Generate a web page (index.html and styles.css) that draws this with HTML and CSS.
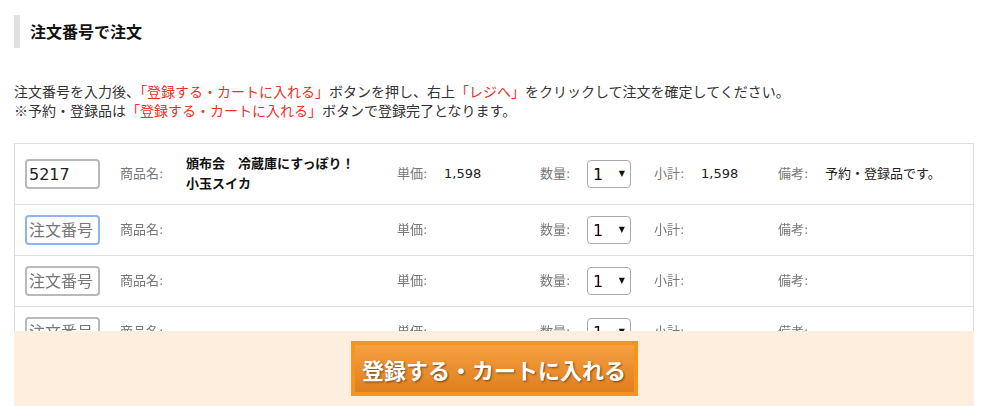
FILE: index.html
```html
<!DOCTYPE html>
<html lang="ja">
<head>
    <meta charset="UTF-8">
    <meta name="viewport" content="width=device-width, initial-scale=1.0">
    <title>注文番号で注文</title>
    <link rel="stylesheet" href="styles.css">
</head>
<body>
    <div class="order">
        <h2 class="order-title">注文番号で注文</h2>

        <p class="order-note">
            注文番号を入力後、<em>「登録する・カートに入れる」</em>ボタンを押し、右上<em>「レジへ」</em>をクリックして注文を確定してください。<br>
            ※予約・登録品は<em>「登録する・カートに入れる」</em>ボタンで登録完了となります。
        </p>

        <div class="order-list">
            <div class="order-row">
                <div><input class="code" type="text" value="5217" placeholder="注文番号"></div>
                <span class="label">商品名:</span>
                <span class="name">頒布会　冷蔵庫にすっぽり！<br>小玉スイカ</span>
                <span class="label">単価:</span>
                <span class="value">1,598</span>
                <span class="label">数量:</span>
                <span class="qty"><select><option>1</option><option>2</option><option>3</option></select></span>
                <span class="label">小計:</span>
                <span class="value">1,598</span>
                <span class="label">備考:</span>
                <span class="value">予約・登録品です。</span>
            </div>
            <div class="order-row">
                <div><input class="code is-focus" type="text" placeholder="注文番号" autofocus></div>
                <span class="label">商品名:</span>
                <span class="name"></span>
                <span class="label">単価:</span>
                <span class="value"></span>
                <span class="label">数量:</span>
                <span class="qty"><select><option>1</option><option>2</option><option>3</option></select></span>
                <span class="label">小計:</span>
                <span class="value"></span>
                <span class="label">備考:</span>
                <span class="value"></span>
            </div>
            <div class="order-row">
                <div><input class="code" type="text" placeholder="注文番号"></div>
                <span class="label">商品名:</span>
                <span class="name"></span>
                <span class="label">単価:</span>
                <span class="value"></span>
                <span class="label">数量:</span>
                <span class="qty"><select><option>1</option><option>2</option><option>3</option></select></span>
                <span class="label">小計:</span>
                <span class="value"></span>
                <span class="label">備考:</span>
                <span class="value"></span>
            </div>
            <div class="order-row">
                <div><input class="code" type="text" placeholder="注文番号"></div>
                <span class="label">商品名:</span>
                <span class="name"></span>
                <span class="label">単価:</span>
                <span class="value"></span>
                <span class="label">数量:</span>
                <span class="qty"><select><option>1</option><option>2</option><option>3</option></select></span>
                <span class="label">小計:</span>
                <span class="value"></span>
                <span class="label">備考:</span>
                <span class="value"></span>
            </div>
        </div>
    </div>

    <div class="order-submit">
        <button type="button">登録する・カートに入れる</button>
    </div>
</body>
</html>
```

FILE: styles.css
```css
/* General */
body {
    margin: 0;
    font-family: "DejaVu Sans", "Noto Sans CJK JP", sans-serif;
    color: #333;
    background: #fff;
}

.order {
    width: 960px;
    margin-left: 14px;
    padding-bottom: 90px;
}

/* Title */
.order-title {
    margin: 15px 0 0;
    padding-left: 10px;
    border-left: 6px solid #e0e0e0;
    font-family: "Noto Sans CJK JP", sans-serif;
    font-size: 16px;
    font-weight: bold;
    line-height: 33px;
    color: #111;
}

/* Note text */
.order-note {
    margin: 34px 0 23px;
    font-family: "Noto Sans CJK JP", sans-serif;
    font-size: 14px;
    line-height: 19px;
    color: #333;
}

.order-note em {
    font-style: normal;
    color: #e8332a;
}

/* Order rows */
.order-list {
    border: 1px solid #ddd;
    border-bottom: none;
}

.order-row {
    display: grid;
    grid-template-columns: 95px 66px 211px 47px 96px 47px 67px 47px 77px 47px 1fr;
    align-items: center;
    padding: 10px 0 10px 10px;
    border-bottom: 1px solid #ddd;
    font-family: "DejaVu Sans", "Noto Sans CJK JP", sans-serif;
    font-size: 13px;
    line-height: 20px;
}

.label {
    color: #777;
}

.value {
    color: #222;
}

.name {
    font-weight: bold;
    color: #111;
}

.code {
    box-sizing: border-box;
    display: block;
    width: 75px;
    height: 30px;
    margin: 0;
    padding: 0 2px;
    border: 2px solid #b9b9b9;
    border-radius: 4px;
    font-family: "DejaVu Sans", "Noto Sans CJK JP", sans-serif;
    font-size: 16px;
    color: #222;
    outline: none;
}

.code::placeholder {
    color: #777;
    font-family: "Noto Sans CJK JP", sans-serif;
}

.code.is-focus,
.code:focus {
    border-color: #8fb3f2;
}

/* Quantity select with drawn arrow */
.qty {
    position: relative;
    display: block;
    width: 44px;
    height: 28px;
}

.qty select {
    appearance: none;
    -webkit-appearance: none;
    box-sizing: border-box;
    width: 44px;
    height: 28px;
    margin: 0;
    padding: 0 0 0 5px;
    border: 1px solid #aaa;
    border-radius: 4px;
    background: #fff;
    font-family: "DejaVu Sans", sans-serif;
    font-size: 16px;
    color: #1a0000;
}

.qty::after {
    content: "▼";
    position: absolute;
    right: 6px;
    top: 9px;
    font-size: 8px;
    line-height: 10px;
    color: #111;
    pointer-events: none;
}

/* Submit bar */
.order-submit {
    position: fixed;
    left: 14px;
    bottom: 0;
    width: 960px;
    height: 75px;
    display: flex;
    justify-content: center;
    align-items: center;
    background: #fdeedd;
}

.order-submit button {
    box-sizing: border-box;
    width: 287px;
    height: 55px;
    padding: 0;
    border: 4px solid #f7931e;
    background: linear-gradient(#f6a041, #df7f1f);
    color: #fff;
    font-family: "Noto Sans CJK JP", sans-serif;
    font-size: 22px;
    font-weight: bold;
    text-shadow: 1px 1px 2px rgba(0, 0, 0, 0.5);
    cursor: pointer;
}
```
